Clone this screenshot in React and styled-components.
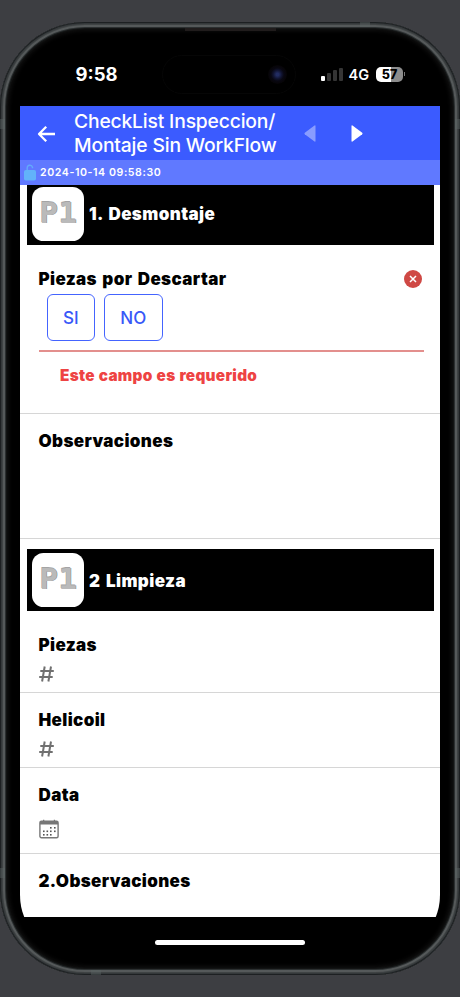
import styled, { createGlobalStyle } from 'styled-components';

const GlobalStyle = createGlobalStyle`
  * { box-sizing: border-box; }
  body {
    margin: 0;
    background: #3d3e42;
    font-family: Inter, "Liberation Sans", sans-serif;
    color: #000;
  }
`;

const Page = styled.div`
  height: 997px;
  padding-top: 22px;
  background: #3d3e42;
  overflow: hidden;
`;

// phone body
const Phone = styled.div`
  position: relative;
  width: 460px;
  height: 953px;
  padding: 20px;
  border-radius: 85px;
  background: #000;
  box-shadow:
    inset 0 0 0 1px #1d2022,
    inset 0 0 0 2px #34383a,
    inset 0 0 0 3px #3f4344,
    inset 0 0 0 5px #55595a,
    inset 0 0 0 6px #2b2f30,
    inset 0 0 1px 7px #131515,
    inset 0 0 5px 8px #161616;
`;

// small antenna bands on the metal edge
const Band = styled.i`
  position: absolute;
  left: ${(p) => p.$x}px;
  top: ${(p) => p.$y}px;
  width: ${(p) => (p.$side ? 5 : 10)}px;
  height: ${(p) => (p.$side ? 10 : 5)}px;
  background: rgba(90, 100, 100, 0.45);
`;

const Speaker = styled.i`
  position: absolute;
  left: 185px;
  top: 6px;
  width: 91px;
  height: 3px;
  background: #201c1c;
`;

const Screen = styled.div`
  display: flex;
  flex-direction: column;
  width: 420px;
  height: 913px;
  border-radius: 60px;
  overflow: hidden;
  background: #000;
`;

const StatusBar = styled.div`
  display: flex;
  flex: none;
  align-items: center;
  height: 64px;
  padding: 0 35px 0 55.5px;
  color: #fff;
`;

const Time = styled.div`
  width: 87px;
  font-size: 18.5px;
  font-weight: 700;
`;

const Island = styled.div`
  display: flex;
  align-items: center;
  justify-content: flex-end;
  width: 134px;
  height: 39px;
  margin-right: 25px;
  padding-right: 8px;
  border: 1px solid #060606;
  border-radius: 20px;
`;

const Lens = styled.div`
  width: 19px;
  height: 19px;
  border-radius: 50%;
  background: radial-gradient(circle, #222c61 0 10%, #10132f 32%, #080711 48%, #060406 70%);
`;

const Signal = styled.div`
  display: flex;
  align-items: flex-end;
  gap: 2.5px;
  height: 14px;
  margin-right: 6px;
`;

const Bar = styled.i`
  width: 3.5px;
  height: ${(p) => p.$h}px;
  border-radius: 1px;
  background: ${(p) => (p.$on ? '#fff' : '#353535')};
`;

const Network = styled.div`
  width: 27.5px;
  font-size: 14.5px;
  font-weight: 600;
`;

const Battery = styled.div`
  flex: none;
  width: 27px;
  height: 15px;
  border-radius: 5px;
  background: linear-gradient(90deg, #fff 57%, #8d8d8d 57%);
  color: #000;
  font-size: 12.5px;
  font-weight: 800;
  line-height: 15px;
  text-align: center;
`;

const BatteryTip = styled.i`
  flex: none;
  width: 1px;
  height: 4px;
  margin-left: 1px;
  background: #777;
`;

const Header = styled.header`
  display: flex;
  flex: none;
  align-items: center;
  height: 54px;
  padding: 1px 0 0 17px;
  background: #3b5bff;
  color: #fff;

  svg { flex: none; }
`;

const Title = styled.h1`
  width: 214px;
  margin: 0 0 0 18px;
  font-size: 19.3px;
  font-weight: 500;
  line-height: 23.5px;
  letter-spacing: -0.17px;
  white-space: nowrap;
`;

const Arrow = styled.svg`
  width: 12px;
  height: 17px;
  margin-left: ${(p) => p.$gap}px;
  fill: #fff;
  opacity: ${(p) => (p.$dim ? 0.4 : 1)};
`;

const DateBar = styled.div`
  display: flex;
  flex: none;
  align-items: center;
  gap: 4px;
  height: 25px;
  padding: 0 0 1px 4px;
  background: #6079ff;
  color: #fff;
  font-size: 10.6px;
  font-weight: 600;
  letter-spacing: 0.58px;
`;

const Form = styled.main`
  flex: none;
  height: 732px;
  background: #fff;
  overflow: hidden;
`;

const Section = styled.div`
  display: flex;
  align-items: center;
  gap: 5.5px;
  height: 62px;
  margin: ${(p) => p.$top}px 6.5px 0;
  padding-left: 5px;
  background: #000;
  color: #fff;
  font-size: 17px;
  font-weight: 900;
  letter-spacing: 0.4px;
  word-spacing: 1.8px;
`;

const SectionTitle = styled.span`
  padding-top: 1.5px;
`;

const Logo = styled.svg`
  flex: none;
  width: 52px;
  height: 54px;
`;

const Field = styled.section`
  height: ${(p) => p.$h}px;
  padding: ${(p) => p.$pad}px 16px 0 18.5px;
  border-bottom: 1px solid ${(p) => (p.$last ? '#fff' : '#d6d6d6')};
`;

const LabelRow = styled.div`
  display: flex;
  align-items: center;
  justify-content: space-between;
  height: 22px;
  padding-right: 2.5px;
`;

const Label = styled.div`
  font-size: 17px;
  font-weight: 900;
  line-height: 22px;
  letter-spacing: 0.37px;
  word-spacing: 1.6px;
`;

const Options = styled.div`
  display: flex;
  gap: 9px;
  height: 62px;
  padding: 4px 0 0 8px;
  border-bottom: 2px solid #e38f8d;
`;

const Option = styled.button`
  width: ${(p) => p.$w}px;
  height: 47.5px;
  padding: 1px 0 0;
  border: 1px solid #4464ff;
  border-radius: 6px;
  background: #fff;
  color: #3858f8;
  font: 500 17px Inter, sans-serif;
`;

const ErrorText = styled.div`
  margin: 13px 0 0 21.5px;
  color: #ee4343;
  font-size: 15.3px;
  font-weight: 900;
  line-height: 22px;
  letter-spacing: 0.3px;
  word-spacing: 0.6px;
`;

const NumberIcon = styled.svg`
  display: block;
  width: 15px;
  height: 16px;
  margin-top: 10px;
  stroke: #707070;
  stroke-width: 2;
  fill: none;
`;

const DateIcon = styled.svg`
  display: block;
  width: 20px;
  height: 20px;
  margin-top: 13px;
`;

const HomeBar = styled.div`
  flex: none;
  width: 150px;
  height: 5.5px;
  margin: 22.5px auto 0;
  border-radius: 3px;
  background: #fff;
`;

function P1Logo() {
  return (
    <Logo viewBox="0 0 52 54">
      <rect width="52" height="54" rx="11.5" fill="#fff" />
      <g fontFamily="DejaVu Sans Mono" fontWeight="bold" fontSize="28">
        <text x="8" y="36" fill="#858585" textLength="38" lengthAdjust="spacingAndGlyphs">P1</text>
        <text x="7" y="35.2" fill="#a4a4a4" textLength="38" lengthAdjust="spacingAndGlyphs">P1</text>
        <text x="7.5" y="35.6" fill="#bababa" textLength="38" lengthAdjust="spacingAndGlyphs">P1</text>
      </g>
    </Logo>
  );
}

function HashIcon() {
  return (
    <NumberIcon viewBox="0 0 15 16">
      <path d="M5.7.5 3.1 15.5M12 .5 9.4 15.5M1.3 5h13.5M.2 11h13.5" />
    </NumberIcon>
  );
}

const dots = [
  [11, 8], [15, 8],
  [4, 11.5], [7.5, 11.5], [11, 11.5], [15, 11.5],
  [4, 15], [7.5, 15], [11, 15],
];

function App() {
  return (
    <Page>
      <GlobalStyle />
      <Phone>
        <Speaker />
        <Band $x={360} $y={0} />
        <Band $x={91} $y={948} />
        <Band $side $x={0} $y={97} />
        <Band $side $x={455} $y={97} />
        <Band $side $x={0} $y={846} />
        <Band $side $x={455} $y={846} />
        <Screen>
          <StatusBar>
            <Time>9:58</Time>
            <Island><Lens /></Island>
            <Signal>
              <Bar $h={5.5} $on />
              <Bar $h={8} />
              <Bar $h={11} />
              <Bar $h={13.5} />
            </Signal>
            <Network>4G</Network>
            <Battery>57</Battery>
            <BatteryTip />
          </StatusBar>

          <Header>
            <svg width="19" height="18" viewBox="0 0 19 18" fill="none" stroke="#fff" strokeWidth="2.3">
              <path d="M9.2 1.8 2 9l7.2 7.2M2 9h16" strokeLinejoin="round" />
            </svg>
            <Title>CheckList Inspeccion/<br />Montaje Sin WorkFlow</Title>
            <Arrow $gap={16} $dim viewBox="0 0 12 17">
              <path d="M10.5.4Q11.5 0 11.5 1v15q0 1-1 .6L.8 9.2q-.8-.7 0-1.4z" />
            </Arrow>
            <Arrow $gap={35} viewBox="0 0 12 17">
              <path d="M1.5.4Q.5 0 .5 1v15q0 1 1 .6l9.7-7.4q.8-.7 0-1.4z" />
            </Arrow>
          </Header>
          <DateBar>
            <svg width="12" height="17" viewBox="0 0 12 17">
              <path d="M3.2 7V3.8a2.7 2.7 0 0 1 5.3-.6v1" fill="none" stroke="#62a9fb" strokeWidth="1.4" />
              <rect y="6" width="12" height="10.5" rx="1.8" fill="#62b2fa" />
            </svg>
            2024-10-14 09:58:30
          </DateBar>

          <Form>
            <Section $top={-2.5}><P1Logo /><SectionTitle>1. Desmontaje</SectionTitle></Section>
            <Field $h={169} $pad={23}>
              <LabelRow>
                <Label>Piezas por Descartar</Label>
                <svg width="18" height="18" viewBox="0 0 18 18">
                  <circle cx="9" cy="9" r="9" fill="#cf4844" />
                  <path d="m6 6 6 6m0-6-6 6" stroke="#fff" strokeWidth="1.5" />
                </svg>
              </LabelRow>
              <Options>
                <Option $w={48.5}>SI</Option>
                <Option $w={58.5}>NO</Option>
              </Options>
              <ErrorText>Este campo es requerido</ErrorText>
            </Field>
            <Field $h={125.5} $pad={16.5}><Label>Observaciones</Label></Field>
            <Section $top={10}><P1Logo /><SectionTitle>2 Limpieza</SectionTitle></Section>
            <Field $h={81.5} $pad={23}>
              <Label>Piezas</Label>
              <HashIcon />
            </Field>
            <Field $h={75} $pad={16}>
              <Label>Helicoil</Label>
              <HashIcon />
            </Field>
            <Field $h={86} $pad={16}>
              <Label>Data</Label>
              <DateIcon viewBox="0 0 20 20">
                <rect x=".9" y="2.2" width="18.2" height="16.6" rx="1.5" fill="#fff" stroke="#777" strokeWidth="1.4" />
                <path d="M1 2h18v3.6H1zM4 .7h1.3v2H4zM14.8.7h1.3v2h-1.3z" fill="#777" />
                {dots.map(([x, y]) => (
                  <rect key={`${x}-${y}`} x={x} y={y} width="1.6" height="1.6" fill="#555" />
                ))}
              </DateIcon>
            </Field>
            <Field $h={80} $pad={16.5} $last><Label>2.Observaciones</Label></Field>
          </Form>
          <HomeBar />
        </Screen>
      </Phone>
    </Page>
  );
}

export default App;
